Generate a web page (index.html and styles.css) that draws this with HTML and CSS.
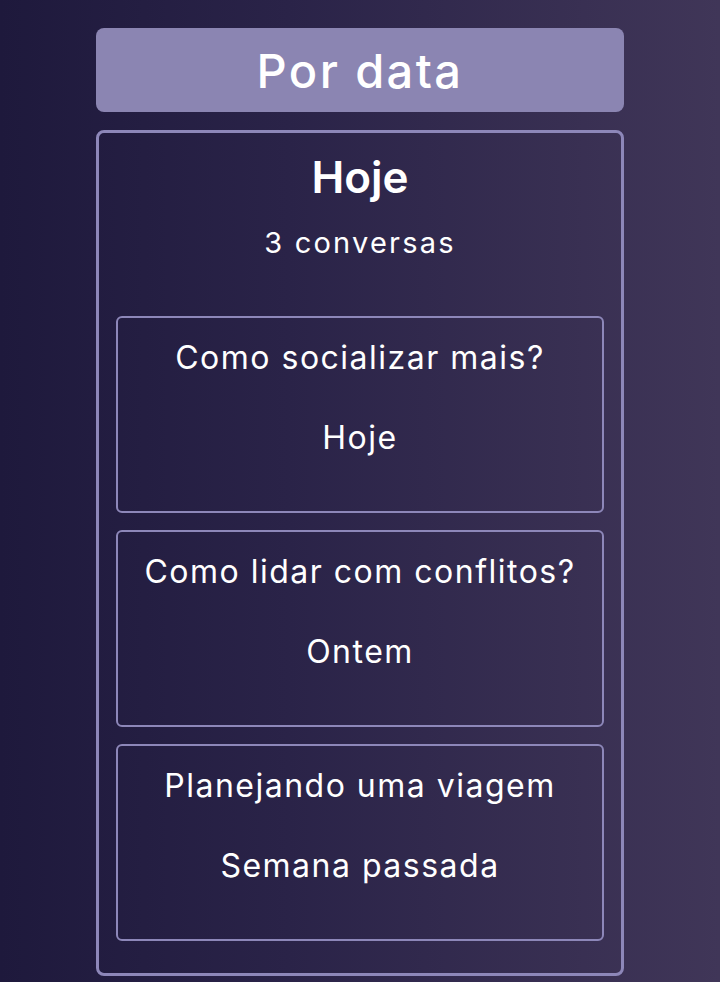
FILE: index.html
```html
<!DOCTYPE html>
<html lang="pt">
<head>
<meta charset="utf-8">
<title>Por data</title>
<link rel="stylesheet" href="styles.css">
</head>
<body>
<main class="page">
  <header class="tab">Por data</header>
  <section class="group">
    <h2 class="group-title">Hoje</h2>
    <p class="group-count">3 conversas</p>
    <div class="list">
      <article class="chat">
        <h3 class="chat-title">Como socializar mais?</h3>
        <p class="chat-date">Hoje</p>
      </article>
      <article class="chat">
        <h3 class="chat-title">Como lidar com conflitos?</h3>
        <p class="chat-date">Ontem</p>
      </article>
      <article class="chat">
        <h3 class="chat-title">Planejando uma viagem</h3>
        <p class="chat-date">Semana passada</p>
      </article>
    </div>
  </section>
</main>
</body>
</html>
```
FILE: styles.css
```css
* { box-sizing: border-box; }
html, body { margin: 0; height: 100%; }
body {
  background: linear-gradient(90deg, #1e193c 0%, #2a2348 40%, #403658 100%);
  font-family: "Inter", "Open Sans", sans-serif;
  color: #ffffff;
  overflow: hidden;
}
.page {
  width: 528px;
  margin: 28px auto 0;
  display: flex;
  flex-direction: column;
  gap: 18px;
}
.tab {
  height: 84px;
  border-radius: 8px;
  background: #8b85b2;
  display: flex;
  align-items: center;
  justify-content: center;
  font-size: 47px;
  font-weight: 500;
  letter-spacing: 2.4px;
}
.group {
  border: 3px solid #8d87b9;
  border-radius: 8px;
  padding: 20px 17px 32px;
  display: flex;
  flex-direction: column;
  align-items: stretch;
}
.group-title {
  margin: 0;
  text-align: center;
  font-size: 44px;
  line-height: 48px;
  font-weight: 600;
}
.group-count {
  margin: 24px 0 0;
  text-align: center;
  font-size: 29px;
  line-height: 36px;
  font-weight: 400;
  letter-spacing: 2.2px;
}
.list {
  margin-top: 55px;
  display: flex;
  flex-direction: column;
  gap: 17px;
}
.chat {
  height: 197px;
  border: 2px solid #8d87b9;
  border-radius: 6px;
  padding-top: 20px;
  text-align: center;
}
.chat-title,
.chat-date {
  font-size: 32px;
  line-height: 40px;
  font-weight: 400;
  letter-spacing: 1.5px;
}
.chat-title { margin: 0; }
.chat-date { margin: 40px 0 0; }
```
